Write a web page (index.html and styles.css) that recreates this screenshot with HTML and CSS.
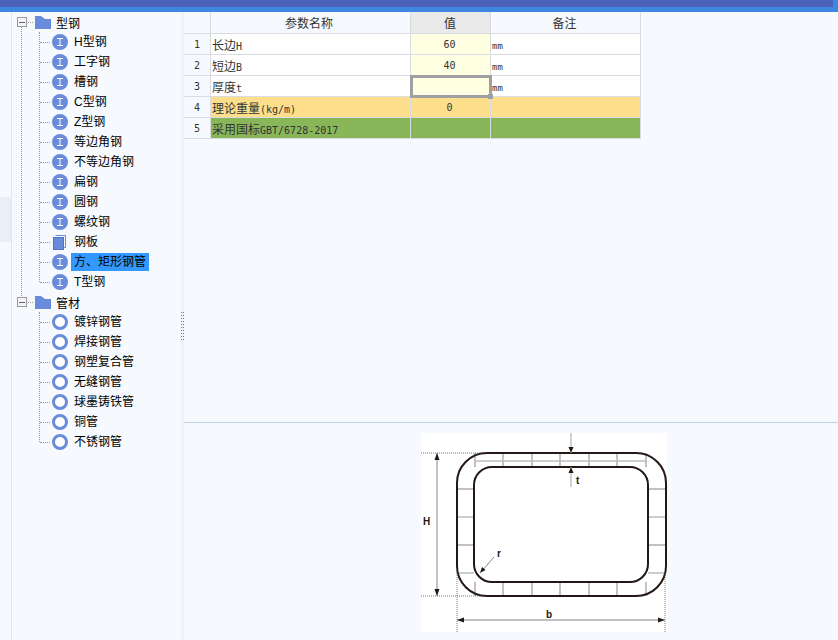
FILE: index.html
```html
<!DOCTYPE html>
<html lang="en">
<head>
    <meta charset="UTF-8">
    <title>型钢参数</title>
    <link rel="stylesheet" href="styles.css">
</head>
<body>
    <svg class="defs" width="0" height="0">
        <symbol id="ico-bar" viewBox="0 0 16 16">
            <circle cx="8" cy="8" r="8" fill="#6a8bdc"/>
            <path d="M5 4.500h6M8 4.500v7M5 11.500h6" fill="none" stroke="#fff" stroke-width="1"/>
        </symbol>
        <symbol id="ico-pipe" viewBox="0 0 16 16">
            <circle cx="8" cy="8" r="6.500" fill="#fff" stroke="#6a8bdc" stroke-width="3"/>
        </symbol>
        <symbol id="ico-plate" viewBox="0 0 16 16">
            <path d="M3.500 1.500h10v12h-2" fill="none" stroke="#6a8bdc"/>
            <rect x="1.500" y="3.500" width="10" height="12" fill="#6a8bdc" stroke="#5573c4"/>
        </symbol>
        <symbol id="ico-folder" viewBox="0 0 16 13">
            <path d="M0 0h6l4 3h6v10H0z" fill="#6a8bdc"/>
            <path d="M7 0h9v2h-6.500z" fill="#fff"/>
        </symbol>
    </svg>

    <div class="titlebar"><div class="titlebar-inner"></div></div>

    <div class="main">
        <div class="strip"><div class="strip-tab"></div></div>

        <div class="tree">
            <div class="root"><span class="box"></span><span class="dash"></span><svg class="folder"><use href="#ico-folder"/></svg><span>型钢</span></div>
            <div class="branch">
                <ul class="leafs">
                    <li><span class="link"></span><svg class="ico"><use href="#ico-bar"/></svg><span class="name">H型钢</span></li>
                    <li><span class="link"></span><svg class="ico"><use href="#ico-bar"/></svg><span class="name">工字钢</span></li>
                    <li><span class="link"></span><svg class="ico"><use href="#ico-bar"/></svg><span class="name">槽钢</span></li>
                    <li><span class="link"></span><svg class="ico"><use href="#ico-bar"/></svg><span class="name">C型钢</span></li>
                    <li><span class="link"></span><svg class="ico"><use href="#ico-bar"/></svg><span class="name">Z型钢</span></li>
                    <li><span class="link"></span><svg class="ico"><use href="#ico-bar"/></svg><span class="name">等边角钢</span></li>
                    <li><span class="link"></span><svg class="ico"><use href="#ico-bar"/></svg><span class="name">不等边角钢</span></li>
                    <li><span class="link"></span><svg class="ico"><use href="#ico-bar"/></svg><span class="name">扁钢</span></li>
                    <li><span class="link"></span><svg class="ico"><use href="#ico-bar"/></svg><span class="name">圆钢</span></li>
                    <li><span class="link"></span><svg class="ico"><use href="#ico-bar"/></svg><span class="name">螺纹钢</span></li>
                    <li><span class="link"></span><svg class="ico"><use href="#ico-plate"/></svg><span class="name">钢板</span></li>
                    <li><span class="link"></span><svg class="ico"><use href="#ico-bar"/></svg><span class="name selected">方、矩形钢管</span></li>
                    <li><span class="link"></span><svg class="ico"><use href="#ico-bar"/></svg><span class="name">T型钢</span></li>
                </ul>
            </div>
            <div class="root"><span class="box"></span><span class="dash"></span><svg class="folder"><use href="#ico-folder"/></svg><span>管材</span></div>
            <div class="branch branch-last">
                <ul class="leafs">
                    <li><span class="link"></span><svg class="ico"><use href="#ico-pipe"/></svg><span class="name">镀锌钢管</span></li>
                    <li><span class="link"></span><svg class="ico"><use href="#ico-pipe"/></svg><span class="name">焊接钢管</span></li>
                    <li><span class="link"></span><svg class="ico"><use href="#ico-pipe"/></svg><span class="name">钢塑复合管</span></li>
                    <li><span class="link"></span><svg class="ico"><use href="#ico-pipe"/></svg><span class="name">无缝钢管</span></li>
                    <li><span class="link"></span><svg class="ico"><use href="#ico-pipe"/></svg><span class="name">球墨铸铁管</span></li>
                    <li><span class="link"></span><svg class="ico"><use href="#ico-pipe"/></svg><span class="name">铜管</span></li>
                    <li><span class="link"></span><svg class="ico"><use href="#ico-pipe"/></svg><span class="name">不锈钢管</span></li>
                </ul>
            </div>
        </div>

        <div class="splitter"><div class="grip"></div></div>

        <div class="content">
            <div class="grid-pane">
                <table class="grid">
                    <thead>
                        <tr><th class="c-num"></th><th class="c-name">参数名称</th><th class="c-val head-val">值</th><th class="c-note">备注</th></tr>
                    </thead>
                    <tbody>
                        <tr><td class="num">1</td><td class="name-cell">长边<span class="lat">H</span></td><td class="val">60</td><td class="note">mm</td></tr>
                        <tr><td class="num">2</td><td class="name-cell">短边<span class="lat">B</span></td><td class="val">40</td><td class="note">mm</td></tr>
                        <tr><td class="num">3</td><td class="name-cell">厚度<span class="lat">t</span></td><td class="val active"><span class="handle"></span></td><td class="note">mm</td></tr>
                        <tr class="row-weight"><td class="num">4</td><td class="name-cell">理论重量<span class="lat">(kg/m)</span></td><td class="val">0</td><td></td></tr>
                        <tr class="row-std"><td class="num">5</td><td class="name-cell">采用国标<span class="lat">GBT/6728-2017</span></td><td class="val"></td><td></td></tr>
                    </tbody>
                </table>
            </div>

            <div class="drawing-pane">
                <svg class="drawing" width="246" height="199" viewBox="421 433 246 199">
                    <rect x="421" y="433" width="246" height="199" fill="#fff"/>
                    <!-- hatch -->
                    <g stroke="#55504e" stroke-width="0.7" fill="none">
                        <path d="M475 453v14M503 453v14M532 453v14M560 453v14M589 453v14M617 453v14M646 453v14"/>
                        <path d="M475 582v14M503 582v14M532 582v14M560 582v14M589 582v14M617 582v14M646 582v14"/>
                        <path d="M457 489h17M457 545h17M648 489h18M648 545h18"/>
                    </g>
                    <g stroke="#bdbdbd" stroke-width="1.300" fill="none">
                        <path d="M475 461h171M457 517h17M648 517h18M457 573h17M648 573h18"/>
                    </g>
                    <rect x="457" y="453" width="209" height="143" rx="30" fill="none" stroke="#231815" stroke-width="2"/>
                    <rect x="474" y="467" width="174" height="115" rx="18" fill="none" stroke="#231815" stroke-width="2"/>
                    <!-- dimensions -->
                    <g stroke="#555" stroke-width="0.8" stroke-dasharray="1 1" fill="none">
                        <path d="M421 453h62M421 596h62M457 573v59M665 573v59"/>
                    </g>
                    <g stroke="#666" stroke-width="0.8" fill="none">
                        <path d="M437 453v143M457 620h208M494 557l-13 15"/>
                    </g>
                    <path d="M571 433v20M571 467v20" stroke="#b5b5b5" stroke-width="1.200" fill="none"/>
                    <g fill="#231815">
                        <path d="M437 453l-2.500 7h5zM437 596l-2.500-7h5zM457 620l7-2.500v5zM665 620l-7-2.500v5zM571 453l-2.500-6h5zM571 467l-2.500 6h5zM480 573l2-6 3.500 3z"/>
                    </g>
                    <g class="dim-text">
                        <text x="423" y="525">H</text>
                        <text x="576" y="484">t</text>
                        <text x="497" y="557">r</text>
                        <text x="546" y="618">b</text>
                    </g>
                </svg>
            </div>
        </div>
    </div>
</body>
</html>
```

FILE: styles.css
```css
html, body {
    margin: 0;
    height: 100%;
}

body {
    height: 640px;
    overflow: hidden;
    display: flex;
    flex-direction: column;
    background-color: #f6fafe;
    font-family: "Liberation Sans", "Noto Sans CJK SC", sans-serif;
    font-size: 12px;
    color: #000;
}

.defs {
    display: block;
    height: 0;
}

.titlebar {
    height: 12px;
    flex: none;
    background-color: #3f86e0;
    padding-right: 5px;
}

.titlebar-inner {
    height: 7px;
    background-color: #4c62b8;
}

.main {
    flex: 1;
    display: flex;
    min-height: 0;
}

/* far left strip */
.strip {
    width: 11px;
    flex: none;
    padding-top: 185px;
    border-right: 1px solid #e3e7ed;
}

.strip-tab {
    height: 45px;
    background-color: #e9eef7;
}

/* tree */
.tree {
    width: 169px;
    flex: none;
}

.root {
    height: 20px;
    display: flex;
    align-items: center;
    padding-left: 5px;
}

.box {
    width: 8px;
    height: 8px;
    border: 1px solid #999;
    background: linear-gradient(#666, #666) center / 6px 1px no-repeat, #f4f4f4;
}

.dash {
    width: 5px;
    margin: 0 2px 0 1px;
    border-bottom: 1px dotted #999;
}

.folder {
    width: 16px;
    height: 13px;
    margin-right: 5px;
}

.branch {
    margin: -5px 0 -4px 9px;
    padding: 5px 0 14px;
    border-left: 1px dotted #999;
}

.branch-last {
    border-left-color: transparent;
}

.leafs {
    display: flow-root;
    list-style: none;
    margin: 0 0 0 17px;
    padding: 0;
    border-left: 1px dotted #999;
}

.leafs li {
    height: 20px;
    display: flex;
    align-items: center;
}

.leafs li:last-child {
    margin-bottom: -10px;
}

.link {
    width: 10px;
    margin-right: 2px;
    border-bottom: 1px dotted #999;
}

.ico {
    width: 16px;
    height: 16px;
    margin-right: 3px;
}

.name {
    line-height: 18px;
    padding: 0 3px;
}

.selected {
    background-color: #3399ff;
}

/* splitter */
.splitter {
    width: 3px;
    flex: none;
    display: flex;
    align-items: center;
    background-color: #f0f1f4;
}

.grip {
    width: 3px;
    height: 28px;
    background:
        repeating-linear-gradient(to bottom, #3f86e0 0 1px, transparent 1px 3px) left / 1px 100% no-repeat,
        repeating-linear-gradient(to bottom, #3f86e0 0 1px, transparent 1px 3px) right / 1px 100% no-repeat;
}

/* right side */
.content {
    flex: 1;
    display: flex;
    flex-direction: column;
    min-width: 0;
}

.grid-pane {
    height: 410px;
    flex: none;
    border-bottom: 1px solid #bfd0de;
}

.grid {
    border-collapse: separate;
    border-spacing: 0;
    table-layout: fixed;
    width: 457px;
    font-family: "DejaVu Sans Mono", "Noto Sans CJK SC", monospace;
    font-size: 10px;
    color: #333;
}

.c-num { width: 27px; }
.c-name { width: 200px; padding-right: 3px !important; }
.c-val { width: 80px; padding-right: 1px !important; }
.c-note { width: 150px; padding-right: 2px !important; }

.grid th, .grid td {
    box-sizing: border-box;
    padding: 0;
    border-right: 1px solid #d9dde1;
    border-bottom: 1px solid #d9dde1;
    overflow: hidden;
    white-space: nowrap;
}

.grid th {
    height: 22px;
    font-family: "Noto Sans CJK SC", sans-serif;
    font-size: 12px;
    font-weight: normal;
    text-align: center;
}

.head-val {
    background-color: #e9e9e9;
}

.grid td {
    height: 21px;
    background-color: #fff;
}

.grid .num {
    background-color: #f6fafe;
    text-align: center;
}

.grid .name-cell {
    padding-left: 1px;
    font-size: 12px;
}

.lat {
    font-size: 10px;
}

.grid .val {
    background-color: #ffffe1;
    text-align: center;
    padding-right: 2px;
}

.grid .note {
    padding: 3px 0 0 1px;
    font-size: 9px;
}

.grid .active {
    position: relative;
    overflow: visible;
    outline: 3px solid #a0a0a2;
    outline-offset: -2px;
}

.handle {
    position: absolute;
    right: -3px;
    bottom: -3px;
    width: 5px;
    height: 5px;
    background-color: #a0a0a2;
}

.grid .row-weight td {
    background-color: #fddf8b;
}

.grid .row-std td {
    background-color: #8ab65a;
}

.grid .row-weight .num, .grid .row-std .num {
    background-color: #f6fafe;
}

.drawing-pane {
    flex: 1;
    padding: 10px 0 0 237px;
}

.drawing {
    display: block;
}

.dim-text {
    font-family: "Liberation Sans", sans-serif;
    font-size: 10px;
    font-weight: bold;
    fill: #231815;
}
```
